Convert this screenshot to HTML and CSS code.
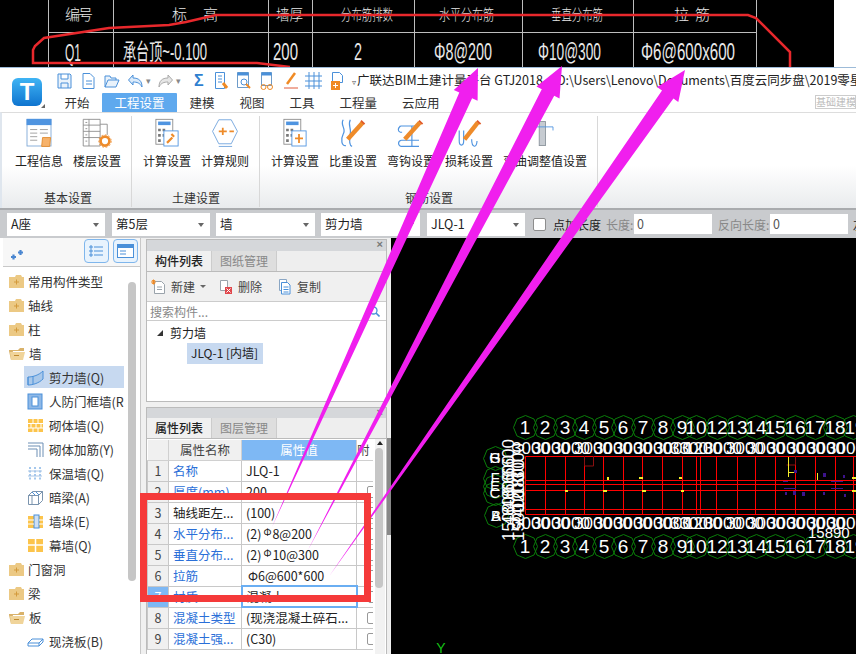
FILE: index.html
```html
<!DOCTYPE html>
<html lang="zh">
<head>
<meta charset="utf-8">
<title>广联达BIM土建计量平台 GTJ2018</title>
<link rel="stylesheet" href="styles.css">
</head>
<body>
<div class="page">
  <svg class="cad-top" width="856" height="67" viewBox="0 0 856 67">
    <rect width="834" height="67" fill="#000"/>
    <g class="cad-lines">
      <path d="M48.500 0V67M113.500 0V67M268.500 0V67M312.500 0V67M414.500 0V67M522.500 0V67M633.500 0V67M756.500 0V67M48 32.500H757"/>
    </g>
    <g class="cad-text">
      <text x="65" y="20" textLength="28" lengthAdjust="spacing">编 号</text>
      <text x="172" y="20" textLength="46" lengthAdjust="spacing">标 高</text>
      <text x="276" y="20" textLength="27" lengthAdjust="spacingAndGlyphs">墙厚</text>
      <text x="341" y="20" textLength="52" lengthAdjust="spacingAndGlyphs">分布筋排数</text>
      <text x="439" y="20" textLength="55" lengthAdjust="spacingAndGlyphs">水平分布筋</text>
      <text x="551" y="20" textLength="52" lengthAdjust="spacingAndGlyphs">垂直分布筋</text>
      <text x="674" y="20" textLength="36" lengthAdjust="spacing">拉 筋</text>
      <text class="big" x="65" y="61" textLength="16" lengthAdjust="spacingAndGlyphs">Q1</text>
      <text class="big" x="123" y="60" textLength="84" lengthAdjust="spacingAndGlyphs">承台顶~-0.100</text>
      <text class="big" x="273" y="60" textLength="25" lengthAdjust="spacingAndGlyphs">200</text>
      <text class="big" x="354" y="60" textLength="8" lengthAdjust="spacingAndGlyphs">2</text>
      <text class="big" x="434" y="60" textLength="58" lengthAdjust="spacingAndGlyphs">Φ8@200</text>
      <text class="big" x="538" y="60" textLength="63" lengthAdjust="spacingAndGlyphs">Φ10@300</text>
      <text class="big" x="641" y="60" textLength="94" lengthAdjust="spacingAndGlyphs">Φ6@600x600</text>
    </g>
    <path class="hand-red" d="M790 67V52L756 18 748 15H216L186 22 169 25 109 28 44 38 35 46 33 50V63H257L290 67"/>
  </svg>

  <header class="appbar">
    <div class="logo-cell">
      <div class="logo">T</div>
      <span class="logo-corner"></span>
    </div>
    <div class="appbar-main">
      <div class="quick-row">
        <div class="quick-icons">
          <svg class="qi m9" width="15" height="18" viewBox="0 0 15 18"><path d="M1 2h12l1 1v13H1zM4 2v5h7V2M4 16v-5h7v5" fill="#e9f2fb" stroke="#4a90d9"/></svg>
          <svg class="qi" width="15" height="18" viewBox="0 0 15 18"><path d="M2 1.500h7l4 4v11H2zM5 9h6M5 12h6" fill="#fff" stroke="#4a90d9"/></svg>
          <svg class="qi m7" width="16" height="18" viewBox="0 0 16 18"><path d="M1 15V4h5l1 2h5v2M1 15l3-7h11l-3 7z" fill="#e9f2fb" stroke="#4a90d9"/></svg>
          <svg class="qi m2" width="17" height="18" viewBox="0 0 17 18"><path d="M6 3L1.500 8 6 13V10c4 0 7 1 9 5 0-6-3-9-9-9z" fill="#dcebfa" stroke="#4a90d9"/></svg>
          <span class="drop">▾</span>
          <svg class="qi m2" width="17" height="18" viewBox="0 0 17 18"><path d="M11 3l4.500 5L11 13V10c-4 0-7 1-9 5 0-6 3-9 9-9z" fill="#e6e6e6" stroke="#aaa"/></svg>
          <span class="drop wide">▾</span>
          <span class="sigma">Σ</span>
          <svg class="qi m7" width="15" height="20" viewBox="0 0 15 20"><path d="M1.500 1.500h9v16h-9zM4 5h4M4 8h4M4 11h4" fill="#fff" stroke="#4a90d9"/><path d="M9 12l4 5" stroke="#f08a24" stroke-width="3"/></svg>
          <svg class="qi m7" width="16" height="20" viewBox="0 0 16 20"><path d="M1.500 1.500h11v15h-11z" fill="#fff" stroke="#6d9bc9"/><path d="M1.500 1.500h11v3h-11z" fill="#4a90d9"/><circle cx="8" cy="11" r="3" fill="none" stroke="#4a90d9"/><path d="M10 13l4 4" stroke="#f08a24" stroke-width="2"/></svg>
          <svg class="qi m9" width="16" height="20" viewBox="0 0 16 20"><path d="M2.500 1.500h10v13h-10z" fill="#fff" stroke="#6d9bc9"/><path d="M2.500 1.500h10v3h-10z" fill="#4a90d9"/><circle cx="4.500" cy="16" r="2.500" fill="none" stroke="#f08a24"/><circle cx="11" cy="16" r="2.500" fill="none" stroke="#f08a24"/></svg>
          <svg class="qi m7" width="14" height="20" viewBox="0 0 14 20"><path d="M3 13L11 2" stroke="#f08a24" stroke-width="2.500"/><path d="M0 17h14" stroke="#e05a3a"/></svg>
          <svg class="qi" width="17" height="20" viewBox="0 0 17 20"><path d="M4 1v17M9 1v17M14 1v17M0 5h17M0 10h17M0 15h17" stroke="#4a90d9" fill="none"/></svg>
          <svg class="qi" width="15" height="20" viewBox="0 0 15 20"><path d="M2.500 1.500h7l3 3v7h-10z" fill="#fff" stroke="#4a90d9"/><rect x="1" y="10" width="9" height="9" fill="#f08a24"/><path d="M5.500 12v5M3 14.500h5" stroke="#fff"/></svg>
        </div>
        <span class="doc-title"><span class="title-caret">▿</span>广联达BIM土建计量平台 GTJ2018 - [D:\Users\Lenovo\Documents\百度云同步盘\2019零星工程</span>
      </div>
      <nav class="tab-row">
        <span class="tab">开始</span>
        <span class="tab active">工程设置</span>
        <span class="tab">建模</span>
        <span class="tab">视图</span>
        <span class="tab">工具</span>
        <span class="tab">工程量</span>
        <span class="tab">云应用</span>
        <span class="ribbon-search">基础建模</span>
      </nav>
    </div>
  </header>

  <section class="ribbon">
    <div class="rib-group">
      <div class="rib-items">
        <div class="rib-item">
          <svg width="32" height="36" viewBox="0 0 32 36"><rect x="2.500" y="1.500" width="27" height="30" fill="#fff" stroke="#7da7d6"/><rect x="2" y="1" width="28" height="7" fill="#4f94e0"/><path d="M6 13h8M6 17h8M6 21h8M6 25h8M17 13h9M17 17h9" stroke="#999"/><path d="M20 22h9l-1 10h-9z" fill="#f6b26b" stroke="#e08a2c"/></svg>
          <span>工程信息</span>
        </div>
        <div class="rib-item">
          <svg width="34" height="36" viewBox="0 0 34 36"><path d="M1.500 1.500h19v30h-19zM1.500 8h19M1.500 15h19M1.500 22h19M8 1.500v30M20.500 7h8v12" fill="#fff" stroke="#8c8c8c"/><path d="M4 5h2M4 12h2M4 19h2M4 26h2" stroke="#888"/><circle cx="26" cy="26" r="5" fill="none" stroke="#ee8b2a" stroke-width="3"/><circle cx="26" cy="26" r="7" fill="none" stroke="#ee8b2a" stroke-dasharray="2 2"/></svg>
          <span>楼层设置</span>
        </div>
      </div>
      <div class="rib-label">基本设置</div>
    </div>
    <div class="rib-group">
      <div class="rib-items">
        <div class="rib-item">
          <svg width="28" height="36" viewBox="0 0 28 36"><rect x="1.500" y="1.500" width="19" height="28" fill="#fff" stroke="#8c8c8c"/><rect x="4" y="4" width="14" height="4" fill="#4f94e0"/><path d="M4 12h3v3H4zM9 12h3v3H9zM4 18h3v3H4zM9 18h3v3H9zM4 24h3v3H4z" fill="#777"/><rect x="10.500" y="14.500" width="16" height="17" fill="#fff" stroke="#4f94e0"/><path d="M14 28l6-6M19 18l3 3" stroke="#ee8b2a" stroke-width="2.500"/></svg>
          <span>计算设置</span>
        </div>
        <div class="rib-item">
          <svg width="30" height="36" viewBox="0 0 30 36"><path d="M8 2h14l7 13-7 14H8L1 15z" fill="#fff" stroke="#6fa3dc"/><path d="M8 15h9M12.500 11v8M20 15h5" stroke="#ee8b2a" stroke-width="2"/><path d="M8 32h15" stroke="#6fa3dc"/></svg>
          <span>计算规则</span>
        </div>
      </div>
      <div class="rib-label">土建设置</div>
    </div>
    <div class="rib-group">
      <div class="rib-items">
        <div class="rib-item">
          <svg width="28" height="36" viewBox="0 0 28 36"><rect x="1.500" y="1.500" width="19" height="28" fill="#fff" stroke="#8c8c8c"/><rect x="4" y="4" width="14" height="4" fill="#4f94e0"/><path d="M4 12h3v3H4zM9 12h3v3H9zM4 18h3v3H4zM9 18h3v3H9zM4 24h3v3H4z" fill="#777"/><rect x="10.500" y="14.500" width="16" height="17" fill="#fff" stroke="#4f94e0"/><path d="M14 23h9M18.500 18v10" stroke="#ee8b2a" stroke-width="2"/></svg>
          <span>计算设置</span>
        </div>
        <div class="rib-item">
          <svg width="30" height="36" viewBox="0 0 30 36"><path d="M4 2C0 8 8 12 4 18 1 24 2 32 7 31M12 2c-3 5 1 9 0 15-1 6-2 14 2 15" fill="none" stroke="#4f94e0" stroke-width="1.400"/><path d="M9 24L26 5" stroke="#ee8b2a" stroke-width="5"/><path d="M24 3l4 4" stroke="#e05a2a" stroke-width="2"/></svg>
          <span>比重设置</span>
        </div>
        <div class="rib-item">
          <svg width="30" height="36" viewBox="0 0 30 36"><path d="M3 9h20M4 25h20M3 9C0 12 0 15 3 16h2M4 25C0 26 0 31 4 32h20M16 9v23" fill="none" stroke="#4f94e0" stroke-width="1.300"/><path d="M8 24L25 5" stroke="#ee8b2a" stroke-width="5"/><path d="M24 3l4 4" stroke="#e05a2a" stroke-width="2"/></svg>
          <span>弯钩设置</span>
        </div>
        <div class="rib-item">
          <svg width="30" height="36" viewBox="0 0 30 36"><path d="M4 14v12c0 6 5 6 5 0V14M18 24c0 10 6 10 6 2" fill="none" stroke="#4f94e0" stroke-width="1.300"/><path d="M10 24L25 5" stroke="#ee8b2a" stroke-width="5"/><path d="M24 3l4 4" stroke="#e05a2a" stroke-width="2"/></svg>
          <span>损耗设置</span>
        </div>
        <div class="rib-item wide">
          <svg width="30" height="36" viewBox="0 0 30 36"><rect x="8.500" y="4" width="7" height="27" fill="#c6cbd1" stroke="#8b949c"/><path d="M1 14V10h23v4" fill="none" stroke="#4f94e0"/></svg>
          <span>弯曲调整值设置</span>
        </div>
      </div>
      <div class="rib-label">钢筋设置</div>
    </div>
  </section>

  <div class="filter-bar">
    <div class="combo">A座</div>
    <div class="combo">第5层</div>
    <div class="combo">墙</div>
    <div class="combo">剪力墙</div>
    <div class="combo">JLQ-1</div>
    <span class="check"></span>
    <span class="flt-label dark">点加长度</span>
    <span class="flt-label">长度:</span>
    <div class="num-input">0</div>
    <span class="flt-label second">反向长度:</span>
    <div class="num-input">0</div>
    <span class="flt-label dark last">左</span>
  </div>

  <main class="workspace">
    <aside class="nav-panel">
      <div class="nav-head">
        <svg class="nav-star" width="14" height="12" viewBox="0 0 14 12"><path d="M1 8h5M3.500 5.500v5M8 3.500h5M10.500 1v5" stroke="#4a86d0" stroke-width="2.200"/></svg>
        <span class="view-btn"><svg width="15" height="14" viewBox="0 0 15 14"><path d="M1 2h2v2H1zM1 6h2v2H1zM1 10h2v2H1zM5 3h9M5 7h9M5 11h9" fill="none" stroke="#4a90d9"/></svg></span>
        <span class="view-btn"><svg width="17" height="14" viewBox="0 0 17 14"><rect x=".5" y=".5" width="16" height="13" fill="#fff" stroke="#4a90d9"/><rect x="1" y="1" width="15" height="3" fill="#4a90d9"/><path d="M3 7h6M3 10h6" stroke="#4a90d9"/></svg></span>
      </div>
      <div class="nav-body">
        <ul class="nav-tree">
          <li class="folder"><svg class="fd" width="15" height="13" viewBox="0 0 15 13"><path d="M0 2h6l1-2h5l1 2h2v11H0z" fill="#ecc984"/><path d="M5 7h5M7.500 4.500v5" stroke="#d39a3c"/></svg>常用构件类型</li>
          <li class="folder"><svg class="fd" width="15" height="13" viewBox="0 0 15 13"><path d="M0 2h6l1-2h5l1 2h2v11H0z" fill="#ecc984"/><path d="M5 7h5M7.500 4.500v5" stroke="#d39a3c"/></svg>轴线</li>
          <li class="folder"><svg class="fd" width="15" height="13" viewBox="0 0 15 13"><path d="M0 2h6l1-2h5l1 2h2v11H0z" fill="#ecc984"/><path d="M5 7h5M7.500 4.500v5" stroke="#d39a3c"/></svg>柱</li>
          <li class="folder"><svg class="fd" width="16" height="13" viewBox="0 0 16 13"><path d="M0 3h9l2-2h4v3H4L2 13 0 4z" fill="#d9b26a"/><path d="M1 5h15l-2 8H2z" fill="#f0d49a"/><path d="M5 8.500h5" stroke="#c08a30"/></svg>墙</li>
          <li class="child selected"><svg class="ci" width="17" height="17" viewBox="0 0 17 17"><path d="M1 8c5 0 11-2 15-6v8c-4 4-10 6-15 6z" fill="#a9c8ea" stroke="#4a90d9"/><path d="M1 8v8M6 7v8" stroke="#4a90d9"/></svg>剪力墙(Q)</li>
          <li class="child"><svg class="ci" width="17" height="17" viewBox="0 0 17 17"><rect x="1" y="1" width="14" height="15" fill="#8fb8e6" stroke="#4a90d9"/><rect x="5" y="4" width="6" height="9" fill="#fff" stroke="#4a90d9"/></svg>人防门框墙(RF</li>
          <li class="child"><svg class="ci" width="17" height="17" viewBox="0 0 17 17"><rect x="1" y="2" width="15" height="13" fill="#fcc44b"/><path d="M1 6.500h15M1 11h15M6 2v4.500M11 2v4.500M4 6.500V11M9 6.500V11M14 6.500V11M6 11v4M11 11v4" stroke="#fff"/></svg>砌体墙(Q)</li>
          <li class="child"><svg class="ci" width="17" height="17" viewBox="0 0 17 17"><path d="M1 2h15v14M1 5h12v11M1 8h9v8" fill="none" stroke="#6d8fb5"/></svg>砌体加筋(Y)</li>
          <li class="child"><svg class="ci" width="17" height="17" viewBox="0 0 17 17"><path d="M3 2v14M8 2v14M13 2v14" stroke="#4a90d9" stroke-dasharray="2 1.500"/><path d="M1 6h14M1 11h14" stroke="#a8c5e6"/></svg>保温墙(Q)</li>
          <li class="child"><svg class="ci" width="17" height="17" viewBox="0 0 17 17"><path d="M1.500 6.500l4-4h10l-4 4zM1.500 6.500h10v9h-10zM11.500 6.500l4-4v9l-4 4zM5 7v8" fill="#fff" stroke="#7b94ae"/><path d="M5 3l3 3M9 3l3 3" stroke="#4a90d9"/></svg>暗梁(A)</li>
          <li class="child"><svg class="ci" width="17" height="17" viewBox="0 0 17 17"><rect x="1" y="3" width="15" height="12" fill="#fcc44b"/><rect x="7" y="2" width="5" height="13" fill="#cfe0f3" stroke="#4a90d9"/><path d="M1 7h6M1 11h6M12 7h4M12 11h4" stroke="#fff"/></svg>墙垛(E)</li>
          <li class="child"><svg class="ci" width="17" height="17" viewBox="0 0 17 17"><rect x="1" y="2" width="15" height="13" fill="#fcc44b"/><path d="M1 8h15M8.500 2v13" stroke="#fff" stroke-width="1.500"/></svg>幕墙(Q)</li>
          <li class="folder"><svg class="fd" width="15" height="13" viewBox="0 0 15 13"><path d="M0 2h6l1-2h5l1 2h2v11H0z" fill="#ecc984"/><path d="M5 7h5M7.500 4.500v5" stroke="#d39a3c"/></svg>门窗洞</li>
          <li class="folder"><svg class="fd" width="15" height="13" viewBox="0 0 15 13"><path d="M0 2h6l1-2h5l1 2h2v11H0z" fill="#ecc984"/><path d="M5 7h5M7.500 4.500v5" stroke="#d39a3c"/></svg>梁</li>
          <li class="folder"><svg class="fd" width="16" height="13" viewBox="0 0 16 13"><path d="M0 3h9l2-2h4v3H4L2 13 0 4z" fill="#d9b26a"/><path d="M1 5h15l-2 8H2z" fill="#f0d49a"/><path d="M5 8.500h5" stroke="#c08a30"/></svg>板</li>
          <li class="child"><svg class="ci" width="17" height="17" viewBox="0 0 17 17"><path d="M1 10l4-4h11v3l-4 4H1zM1 10h11l4-4M12 10v3" fill="#fff" stroke="#4a90d9"/></svg>现浇板(B)</li>
        </ul>
        <div class="nav-scroll"></div>
      </div>
    </aside>

    <div class="mid-col">
      <section class="dock dock-list">
        <div class="dock-title"><span class="dock-close">×</span></div>
        <div class="dock-tabs"><span class="dock-tab on">构件列表</span><span class="dock-tab">图纸管理</span></div>
        <div class="dock-tools">
          <span class="tool"><svg width="15" height="16" viewBox="0 0 15 16"><path d="M3.500 2.500h7l3 3v9h-10z" fill="#fff" stroke="#9aa3ab"/><path d="M6 8h5M6 10.500h5" stroke="#9aa3ab"/><path d="M0 3h5M2.500 .5v5M1 1l3 4M4 1L1 5" stroke="#f08a24"/></svg>新建<i class="caret"></i></span>
          <span class="tool"><svg width="14" height="16" viewBox="0 0 14 16"><path d="M1.500 1.500h7v10h-7z" fill="#fff" stroke="#9aa3ab"/><rect x="6" y="8" width="7" height="7" fill="#e0474c"/><path d="M7.500 9.500l4 4M11.500 9.500l-4 4" stroke="#fff"/></svg>删除</span>
          <span class="tool"><svg width="14" height="16" viewBox="0 0 14 16"><path d="M1.500 .5h7v11h-7z" fill="#fff" stroke="#8aa6c4"/><path d="M3.500 3.500h6l2.500 2.500v9h-8.500z" fill="#fff" stroke="#4a90d9"/><path d="M5.500 8h5M5.500 10.500h5M5.500 13h5" stroke="#4a90d9"/></svg>复制</span>
        </div>
        <div class="dock-search">
          <span>搜索构件...</span>
          <svg width="11" height="11" viewBox="0 0 11 11"><circle cx="4.500" cy="4.500" r="3.500" fill="none" stroke="#4a90d9" stroke-width="1.300"/><path d="M7 7l3.500 3.500" stroke="#4a90d9" stroke-width="1.600"/></svg>
        </div>
        <div class="comp-tree">
          <div class="comp-root"><i class="tree-tri"></i>剪力墙</div>
          <div class="comp-leaf">JLQ-1 [内墙]</div>
        </div>
      </section>

      <section class="dock dock-props">
        <div class="dock-title"><span class="dock-close">×</span></div>
        <div class="dock-tabs"><span class="dock-tab on">属性列表</span><span class="dock-tab">图层管理</span></div>
        <div class="props-body">
          <table class="props">
            <colgroup><col class="c-no"><col class="c-name"><col class="c-val"><col class="c-extra"></colgroup>
            <thead><tr><th class="corner"></th><th>属性名称</th><th class="val-head">属性值</th><th class="extra-head">附</th></tr></thead>
            <tbody>
              <tr><td class="no">1</td><td class="link">名称</td><td>JLQ-1</td><td></td></tr>
              <tr><td class="no">2</td><td class="link">厚度(mm)</td><td>200</td><td><i class="cb"></i></td></tr>
              <tr><td class="no">3</td><td>轴线距左...</td><td>(100)</td><td><i class="cb"></i></td></tr>
              <tr><td class="no">4</td><td class="link">水平分布...</td><td>(2)<sup class="bar">Φ</sup>8@200</td><td><i class="cb"></i></td></tr>
              <tr><td class="no">5</td><td class="link">垂直分布...</td><td>(2)<sup class="bar">Φ</sup>10@300</td><td><i class="cb"></i></td></tr>
              <tr><td class="no">6</td><td class="link">拉筋</td><td class="inset">Φ6@600*600</td><td><i class="cb"></i></td></tr>
              <tr><td class="no sel">7</td><td class="link">材质</td><td class="editing">混凝土<i class="edit-caret"></i></td><td><i class="cb"></i></td></tr>
              <tr><td class="no">8</td><td class="link">混凝土类型</td><td>(现浇混凝土碎石...</td><td><i class="cb"></i></td></tr>
              <tr><td class="no">9</td><td class="link">混凝土强...</td><td>(C30)</td><td><i class="cb"></i></td></tr>
            </tbody>
          </table>
          <div class="props-scroll"><span class="up-arrow"></span><span class="props-thumb"></span></div>
        </div>
      </section>
    </div>

    <div class="splitter"><span class="split-thumb"></span></div>

    <div class="cad-main">
      <svg width="465" height="416" viewBox="391 238 465 416">
        <defs>
          <polygon id="hex" points="0,-12 8.500,-8.500 12,0 8.500,8.500 0,12 -8.500,8.500 -12,0 -8.500,-8.500" fill="none" stroke="#0a7d0a"/>
        </defs>
        <g transform="translate(.5 .5)">
          <use href="#hex" x="525" y="427"/><use href="#hex" x="545" y="427"/><use href="#hex" x="565" y="427"/><use href="#hex" x="584" y="427"/><use href="#hex" x="604" y="427"/><use href="#hex" x="623" y="427"/><use href="#hex" x="643" y="427"/><use href="#hex" x="663" y="427"/><use href="#hex" x="682" y="427"/><use href="#hex" x="696" y="427"/><use href="#hex" x="717" y="427"/><use href="#hex" x="737" y="427"/><use href="#hex" x="756" y="427"/><use href="#hex" x="775" y="427"/><use href="#hex" x="795" y="427"/><use href="#hex" x="815" y="427"/><use href="#hex" x="835" y="427"/><use href="#hex" x="853" y="427"/>
          <use href="#hex" x="525" y="546"/><use href="#hex" x="545" y="546"/><use href="#hex" x="565" y="546"/><use href="#hex" x="584" y="546"/><use href="#hex" x="604" y="546"/><use href="#hex" x="623" y="546"/><use href="#hex" x="643" y="546"/><use href="#hex" x="663" y="546"/><use href="#hex" x="682" y="546"/><use href="#hex" x="696" y="546"/><use href="#hex" x="717" y="546"/><use href="#hex" x="737" y="546"/><use href="#hex" x="756" y="546"/><use href="#hex" x="775" y="546"/><use href="#hex" x="795" y="546"/><use href="#hex" x="815" y="546"/><use href="#hex" x="835" y="546"/><use href="#hex" x="853" y="546"/>
          <use href="#hex" x="495" y="458"/><use href="#hex" x="495" y="478"/><use href="#hex" x="495" y="486"/><use href="#hex" x="495" y="493"/><use href="#hex" x="496" y="515"/>
        </g>
        <g class="red-grid" transform="translate(.5 .5)">
          <path d="M525 456H856M525 514H856M525 490H856M525 509H856M525 480H856M525 484H856M525 456V514M545 456V514M565 456V514M584 456V514M603 456V514M623 456V514M642 456V514M662 456V514M682 456V514M696 456V514M700 456V514M716 456V514M737 456V514M755 456V514M775 456V514M795 456V514M815 456V514M835 456V514M853 456V514"/>
        </g>
        <path d="M584.500 456v10h9v-10M795.500 456v9h-9" fill="none" stroke="#8a1010"/>
        <g fill="#f5ee2a">
          <rect x="565" y="490" width="3" height="2"/><rect x="603" y="490" width="4" height="2"/><rect x="642" y="490" width="4" height="2"/><rect x="681" y="490" width="3" height="2"/>
          <rect x="607" y="477" width="2" height="3"/><rect x="639" y="477" width="4" height="2"/><rect x="679" y="477" width="3" height="2"/>
          <rect x="788" y="457" width="1" height="20"/><rect x="788" y="472" width="8" height="1"/><rect x="817" y="473" width="1" height="7"/><rect x="852" y="477" width="4" height="2"/><rect x="852" y="490" width="4" height="2"/>
        </g>
        <g fill="#3c148c">
          <rect x="794" y="470" width="3" height="3"/><rect x="793" y="491" width="3" height="4"/><rect x="784" y="488" width="12" height="1"/><rect x="802" y="492" width="3" height="4"/><rect x="823" y="473" width="3" height="4"/><rect x="823" y="492" width="2" height="3"/><rect x="843" y="475" width="2" height="3"/><rect x="831" y="481" width="12" height="1"/><rect x="831" y="488" width="12" height="1"/><rect x="783" y="481" width="5" height="1"/><rect x="785" y="492" width="2" height="3"/><rect x="844" y="494" width="2" height="3"/>
        </g>
        <g class="dim">
          <text x="531" y="454">3000</text><text x="551" y="454">3000</text><text x="571" y="454">3000</text><text x="593" y="454">3000</text><text x="613" y="454">3000</text><text x="633" y="454">3000</text><text x="653" y="454">3000</text><text x="673" y="454">3000</text><text x="689" y="454">3300</text><text x="703" y="454">1200</text><text x="723" y="454">3000</text><text x="745" y="454">3000</text><text x="766" y="454">3000</text><text x="786" y="454">3000</text><text x="806" y="454">3000</text><text x="826" y="454">3000</text><text x="846" y="454">3000</text>
          <text x="531" y="529">3000</text><text x="551" y="529">3000</text><text x="571" y="529">3000</text><text x="593" y="529">3000</text><text x="613" y="529">3000</text><text x="633" y="529">3000</text><text x="653" y="529">3000</text><text x="673" y="529">3000</text><text x="689" y="529">3300</text><text x="703" y="529">1200</text><text x="723" y="529">3000</text><text x="745" y="529">3000</text><text x="766" y="529">3000</text><text x="786" y="529">3000</text><text x="806" y="529">3000</text><text x="826" y="529">3000</text><text x="846" y="529">3000</text>
          <text class="sum" x="808" y="538">15890</text>
          <text transform="translate(524 462) rotate(-90)">3000</text>
          <text transform="translate(524 478) rotate(-90)">1800</text>
          <text transform="translate(524 492) rotate(-90)">1200</text>
          <text transform="translate(524 508) rotate(-90)">2400</text>
          <text transform="translate(524 522) rotate(-90)">1500</text>
          <text transform="translate(514 458) rotate(-90)">6600</text>
          <text transform="translate(514 474) rotate(-90)">6600</text>
          <text transform="translate(514 490) rotate(-90)">4800</text>
          <text transform="translate(514 506) rotate(-90)">4800</text>
          <text transform="translate(514 522) rotate(-90)">1500</text>
        </g>
        <g class="axis">
          <text x="525" y="434">1</text><text x="545" y="434">2</text><text x="565" y="434">3</text><text x="584" y="434">4</text><text x="604" y="434">5</text><text x="623" y="434">6</text><text x="643" y="434">7</text><text x="663" y="434">8</text><text x="682" y="434">9</text><text x="696" y="434">10</text><text x="717" y="434">12</text><text x="737" y="434">13</text><text x="756" y="434">14</text><text x="775" y="434">15</text><text x="795" y="434">16</text><text x="815" y="434">17</text><text x="835" y="434">18</text><text x="855" y="434">19</text>
          <text x="525" y="553">1</text><text x="545" y="553">2</text><text x="565" y="553">3</text><text x="584" y="553">4</text><text x="604" y="553">5</text><text x="623" y="553">6</text><text x="643" y="553">7</text><text x="663" y="553">8</text><text x="682" y="553">9</text><text x="696" y="553">10</text><text x="717" y="553">12</text><text x="737" y="553">13</text><text x="756" y="553">14</text><text x="775" y="553">15</text><text x="795" y="553">16</text><text x="815" y="553">17</text><text x="835" y="553">18</text><text x="855" y="553">19</text>
          <text class="ax-l" x="495" y="463">H</text><text class="ax-l" x="495" y="463">G</text><text class="ax-l" x="495" y="483">F</text><text class="ax-l" x="495" y="491">E</text><text class="ax-l" x="495" y="498">C</text><text class="ax-l" x="496" y="521">B</text><text class="ax-l" x="496" y="521">A</text>
        </g>
        <text class="y-axis" x="441" y="653">Y</text>
      </svg>
    </div>
  </main>

  <svg class="overlay" width="856" height="654" viewBox="0 0 856 654">
    <g class="arrows">
      <polygon points="272,527 459.300,92.600 453.800,90 478,68 477.600,100.700 472.100,98.300"/>
      <polygon points="308,550 541.800,89.200 536.500,86.500 562,66 559.500,98.500 554.200,95.800"/>
      <polygon points="330,575 662,90.500 657,87 685,70 678.300,102 673.400,98.500"/>
    </g>
    <rect class="red-box" x="143.500" y="496.500" width="224" height="102"/>
  </svg>
</div>
</body>
</html>
```

FILE: styles.css
```css
* { box-sizing: border-box; }
html, body { margin: 0; padding: 0; }
body {
  background: #fff;
  font-family: "Noto Sans CJK SC", "Liberation Sans", sans-serif;
  font-size: 12px;
  color: #333;
}
.page {
  position: relative;
  width: 856px;
  height: 654px;
  overflow: hidden;
}
svg { display: block; flex: none; }

/* Photographed drawing at the top */
.cad-top { background: #fff; }
.cad-lines path { stroke: #bdbdbd; stroke-width: 1; fill: none; }
.cad-text text { fill: #e8e8e8; font-size: 15px; font-family: "Noto Sans CJK SC", sans-serif; font-weight: 300; }
.cad-text .big { font-size: 23px; font-family: "Liberation Sans", "Noto Sans CJK SC", sans-serif; font-weight: 400; }
.hand-red { fill: none; stroke: #e8282c; stroke-width: 2.500; }

/* App bar */
.appbar {
  display: flex;
  height: 45px;
  background: #fff;
  border-top: 1px solid #9dbbd8;
}
.logo-cell {
  position: relative;
  width: 57px;
  padding: 10px 0 0 12px;
  flex: none;
}
.logo {
  width: 30px;
  height: 28px;
  border-radius: 6px;
  background: linear-gradient(#3fb4f4, #0f74cf);
  color: #fff;
  font: bold 24px/28px "Liberation Sans", sans-serif;
  text-align: center;
}
.logo-corner {
  position: absolute;
  left: 41px;
  top: 36px;
  border-left: 4px solid transparent;
  border-bottom: 4px solid #666;
}
.appbar-main { flex: 1; min-width: 0; }
.quick-row {
  display: flex;
  align-items: center;
  height: 25px;
  white-space: nowrap;
  overflow: hidden;
}
.quick-icons { display: flex; align-items: center; flex: none; width: 295px; }
.qi { margin-right: 8px; }
.qi.m2 { margin-right: 2px; }
.qi.m7 { margin-right: 7px; }
.qi.m9 { margin-right: 9px; }
.drop { color: #888; font-size: 9px; width: 11px; flex: none; }
.drop.wide { width: 18px; }
.sigma { color: #2f7fd0; font: bold 16px "Liberation Sans", sans-serif; width: 20px; flex: none; }
.doc-title { color: #222; font-size: 12.500px; line-height: 25px; }
.title-caret { color: #555; font-size: 8px; margin-right: 1px; }
.tab-row {
  display: flex;
  align-items: stretch;
  height: 19px;
  position: relative;
}
.tab {
  padding: 0 12.500px;
  line-height: 19px;
  font-size: 12.500px;
  color: #333;
}
.tab:first-child { margin-left: -5px; }
.tab.active { background: #5fa9ee; color: #fff; border-radius: 1px 1px 0 0; }
.ribbon-search {
  margin-left: auto;
  width: 41px;
  height: 14px;
  margin-top: 2px;
  border: 1px solid #ccc;
  color: #bbb;
  font-size: 10px;
  line-height: 12px;
  overflow: hidden;
  white-space: nowrap;
}

/* Ribbon */
.ribbon {
  display: flex;
  height: 96px;
  border-top: 1px solid #ddd;
  border-left: 2px solid #dfe6ee;
  background: linear-gradient(#fff 55%, #e9ebed 100%);
}
.rib-group {
  display: flex;
  flex-direction: column;
  padding: 0 10px 0 11px;
  border-right: 1px solid #d8d8d8;
  margin: 3px 0 1px;
}
.rib-group:first-child { padding-left: 13px; }
.rib-items { display: flex; gap: 10px; flex: 1; }
.rib-item {
  display: flex;
  flex-direction: column;
  align-items: center;
  width: 48px;
  font-size: 12px;
  color: #222;
  white-space: nowrap;
  padding-top: 2px;
}
.rib-item svg { height: 32px; }
.rib-item span { line-height: 18px; margin-top: 2px; }
.rib-item.wide { width: 84px; }
.rib-label { text-align: center; line-height: 18px; color: #333; font-size: 12px; }

/* Filter bar */
.filter-bar {
  display: flex;
  align-items: center;
  height: 30px;
  padding: 0 0 0 7px;
  background: #c9cbce;
  border-top: 2px solid #a9abae;
  white-space: nowrap;
  overflow: hidden;
}
.filter-bar > * { flex: none; }
.combo {
  position: relative;
  width: 98px;
  height: 23px;
  margin-right: 7px;
  padding: 0 4px;
  background: #fff;
  line-height: 22px;
  font-size: 12.500px;
  color: #222;
}
.combo:nth-child(2) { margin-right: 6px; }
.combo:nth-child(3) { width: 99px; margin-right: 6px; }
.combo:nth-child(4) { width: 99px; }
.combo:nth-child(5) { margin-right: 8px; }
.combo::after {
  content: "";
  position: absolute;
  right: 6px;
  top: 10px;
  border: 3.500px solid transparent;
  border-top: 4px solid #666;
  border-bottom: 0;
}
.check {
  width: 13px;
  height: 13px;
  margin-right: 7px;
  background: #fff;
  border: 1px solid #8d8d8d;
  border-radius: 2px;
}
.flt-label { color: #888; font-size: 12px; width: 28px; }
.flt-label.dark { color: #222; width: 48px; margin-right: 5px; }
.flt-label.second { width: 52px; margin-left: 6px; }
.flt-label.last { width: auto; margin: 0 0 0 5px; }
.num-input {
  width: 78px;
  height: 20px;
  background: #fff;
  padding-left: 3px;
  line-height: 19px;
  color: #555;
  font-size: 12.500px;
}

/* Workspace */
.workspace { display: flex; height: 416px; background: #000; }
.nav-panel {
  width: 141px;
  flex: none;
  display: flex;
  flex-direction: column;
  background: #fff;
  padding-left: 3px;
  border-right: 1px solid #c8c8c8;
}
.nav-head {
  display: flex;
  align-items: center;
  height: 29px;
  flex: none;
  padding: 0 2px 0 7px;
  gap: 4px;
  border-bottom: 1px solid #c8c8c8;
  background: #f7f7f7;
}
.nav-star { margin-right: auto; margin-top: 6px; }
.view-btn {
  display: flex;
  align-items: center;
  justify-content: center;
  width: 25px;
  height: 24px;
  background: #e8f3fd;
  border: 1px solid #7fb6ec;
  border-radius: 4px;
  margin-top: -2px;
}
.nav-body { position: relative; flex: 1; overflow: hidden; }
.nav-tree { list-style: none; margin: 0; padding: 2px 0 0; }
.nav-tree li {
  display: flex;
  align-items: center;
  height: 24px;
  font-size: 12.500px;
  color: #333;
  white-space: nowrap;
  overflow: hidden;
}
.folder { padding-left: 6px; }
.fd { margin-right: 4px; }
.child { margin-left: 21px; width: 100px; padding-left: 3px; }
.nav-tree .child.selected { background: #c7d9f0; height: 22px; margin-top: 1px; margin-bottom: 1px; }
.ci { margin-right: 5px; }
.nav-scroll {
  position: absolute;
  left: 125px;
  top: 15px;
  width: 8px;
  height: 299px;
  background: #c6c6c6;
  border-radius: 4px;
}

/* Dock panels */
.mid-col {
  width: 246px;
  flex: none;
  padding: 1px 0 0 5px;
  display: flex;
  flex-direction: column;
  gap: 5px;
  background: #f0f0f0;
}
.dock { background: #fff; border: 1px solid #bbb; overflow: hidden; }
.dock-list { height: 163px; flex: none; }
.dock-props { flex: 1; border-bottom: 0; }
.dock-title {
  position: relative;
  height: 10px;
  background: #d5d7da;
}
.dock-list .dock-title { height: 11px; }
.dock-close {
  position: absolute;
  right: 3px;
  top: -3px;
  color: #777;
  font: bold 11px/14px "Liberation Sans", sans-serif;
}
.dock-tabs {
  display: flex;
  height: 21px;
  background: #eee;
  border-bottom: 1px solid #bbb;
}
.dock-tab {
  width: 65px;
  text-align: center;
  line-height: 20px;
  font-size: 12px;
  color: #888;
  background: #dedede;
  border-right: 1px solid #ccc;
}
.dock-tab.on { background: #f0f0f0; color: #222; font-weight: 500; }
.dock-tools {
  display: flex;
  align-items: center;
  height: 30px;
  padding-left: 4px;
  gap: 13px;
  background: #f0f0f0;
  border-bottom: 1px solid #ccc;
}
.tool { display: flex; align-items: center; gap: 5px; color: #444; font-size: 12px; }
.tool:last-child { margin-left: 3px; }
.caret {
  border: 3px solid transparent;
  border-top: 3px solid #666;
  border-bottom: 0;
}
.dock-search {
  display: flex;
  align-items: center;
  justify-content: space-between;
  height: 19px;
  padding: 0 6px 0 3px;
  color: #888;
  font-size: 12px;
  border-bottom: 1px solid #ccc;
}
.comp-tree { padding: 1px 0 0 10px; font-size: 12px; color: #222; }
.comp-root { display: flex; align-items: center; gap: 7px; height: 21px; }
.tree-tri {
  width: 0;
  height: 0;
  border-left: 6px solid transparent;
  border-bottom: 6px solid #333;
}
.comp-leaf {
  width: 76px;
  height: 21px;
  margin-left: 30px;
  padding-left: 4px;
  background: #c7d9f0;
  line-height: 20px;
  white-space: nowrap;
}

/* Property table */
.props-body { position: relative; background: #fff; height: 215px; overflow: hidden; padding-top: 1px; }
.props {
  table-layout: fixed;
  border-collapse: collapse;
  width: 225px;
  font-size: 12.500px;
  color: #222;
}
.c-no { width: 21px; }
.c-name { width: 73px; }
.c-val { width: 115px; }
.c-extra { width: 16px; }
.props th {
  height: 20px;
  padding: 0;
  font-weight: 400;
  color: #444;
  background: #f0f0f0;
  border-right: 1px solid #d0d0d0;
  border-bottom: 1px solid #d0d0d0;
  overflow: hidden;
}
.props th.val-head { background: #7eb8f4; color: #fff; }
.props th.extra-head { text-align: left; background: #fff; border-right: 0; }
.props td {
  height: 21px;
  padding: 0 0 0 4px;
  white-space: nowrap;
  overflow: hidden;
  border: 1px solid #c8c8c8;
  line-height: 19px;
}
.props td:last-child { border-right: 0; padding: 0 0 0 10px; }
.props td.no { text-align: center; padding: 0; color: #444; background: #f0f0f0; }
.props td.sel { background: #7eb8f4; color: #fff; }
.props td.link { color: #2a6fd8; }
.props td.inset { padding-left: 6px; }
.props td.editing { position: relative; border: 2px solid #6aaef2; }
.bar { font-size: 10px; line-height: 0; vertical-align: 3px; margin: 0 1px 0 2px; }
.edit-caret {
  position: absolute;
  right: 7px;
  top: 8px;
  border: 3px solid transparent;
  border-top: 3px solid #444;
  border-bottom: 0;
}
.cb {
  display: block;
  width: 10px;
  height: 12px;
  border: 1px solid #999;
  border-radius: 2px;
}
.props-scroll {
  position: absolute;
  left: 228px;
  top: 0;
  width: 10px;
  height: 100%;
  background: #f2f2f2;
}
.up-arrow {
  display: block;
  margin: 2px auto 0;
  width: 0;
  border: 3px solid transparent;
  border-bottom: 4px solid #222;
  border-top: 0;
}
.props-thumb {
  display: block;
  width: 8px;
  height: 140px;
  margin-top: 3px;
  background: #c6c6c6;
  border-radius: 4px;
}

.splitter { width: 4px; flex: none; background: #efefef; }
.split-thumb { display: block; width: 4px; height: 97px; margin-top: 200px; background: #888; }
.cad-main { flex: 1; background: #000; }

/* Drawing */
.red-grid path { fill: none; stroke: #ff0000; stroke-width: 1; }
.dim text { fill: #fff; font: 17px "Liberation Sans", sans-serif; text-anchor: middle; }
.dim .sum { text-anchor: start; font-size: 15px; }
.axis text { fill: #fff; font: 19px "Liberation Sans", sans-serif; text-anchor: middle; }
.axis .ax-l { font-size: 15px; }
.y-axis { fill: #16c016; font: 14px "Liberation Sans", sans-serif; text-anchor: middle; }

/* Annotations drawn on the screenshot */
.overlay { position: absolute; left: 0; top: 0; pointer-events: none; }
.arrows polygon { fill: #f01fee; }
.red-box { fill: none; stroke: #f53a3a; stroke-width: 7; }
```
